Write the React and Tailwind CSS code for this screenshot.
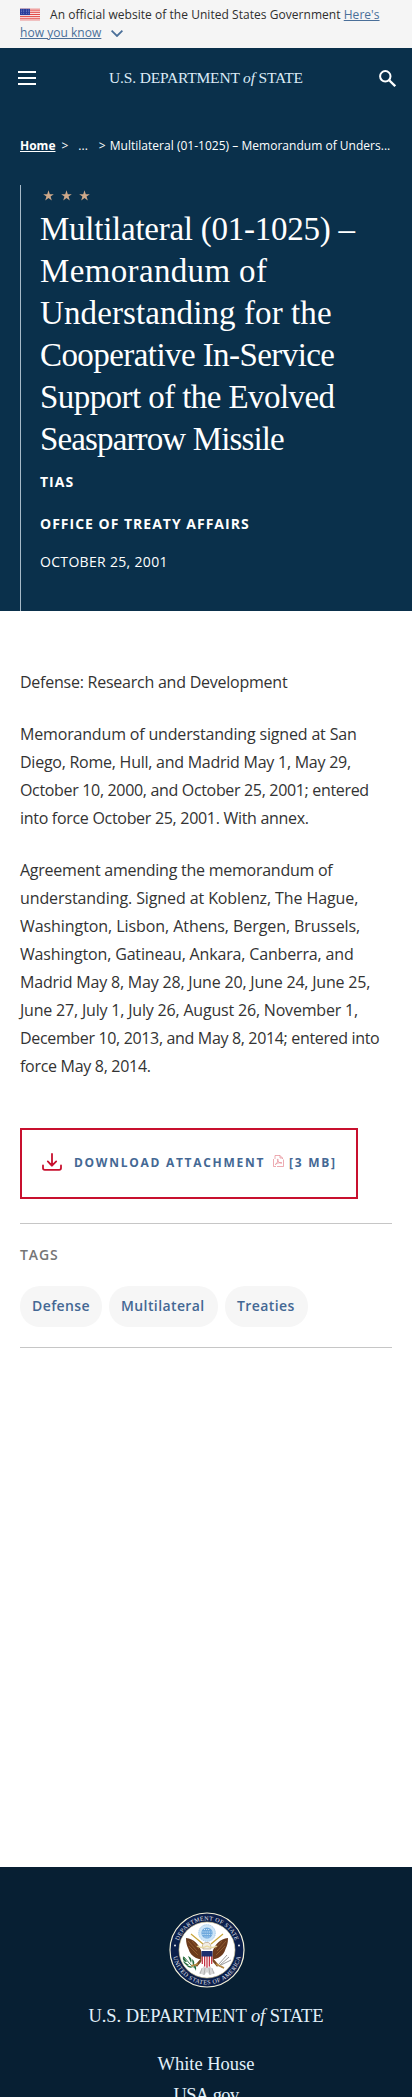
const stripes = [0, 1, 2, 3, 4, 5, 6];

function Flag() {
  return (
    <svg className="mr-[10px] inline-block h-3 w-5 -translate-y-[1.500px]" viewBox="0 0 20 12">
      <rect width="20" height="12" fill="#fff" />
      {stripes.map((n) => (
        <rect key={n} y={n * 1.85} width="20" height="0.98" fill="#e0403e" />
      ))}
      <rect width="10" height="6.6" fill="#2a3c9b" />
      {[1.5, 3.3, 5.1].map((y) =>
        [1.5, 4, 6.5, 9].map((x) => <circle key={x + "-" + y} cx={x - 0.2} cy={y} r="0.45" fill="#b9c0ea" />)
      )}
    </svg>
  );
}

function Star() {
  return (
    <svg className="h-[11px] w-[11px]" viewBox="0 0 24 24" fill="#cfa98a">
      <path d="M12 .8l2.8 8.3h8.8l-7.1 5.2 2.7 8.5-7.2-5.2-7.2 5.2 2.7-8.5L.4 9.1h8.8z" />
    </svg>
  );
}

function Wordmark({ className }) {
  return (
    <span className={"whitespace-nowrap " + className}>
      U.S. DEPARTMENT <i>of</i> STATE
    </span>
  );
}

function Seal() {
  return (
    <svg className="ml-px h-[76px] w-[76px] shrink-0" viewBox="-38 -38 76 76">
      <defs>
        <path id="seal-top" d="M-29.6 0A29.6 29.6 0 0 1 29.6 0" />
        <path id="seal-bottom" d="M-34.3 0A34.3 34.3 0 0 0 34.3 0" />
      </defs>
      <circle r="37" fill="#0b1f4b" stroke="#f3f0d8" strokeWidth="1.2" />
      <circle r="28" fill="#fff" stroke="#d8c992" strokeWidth="0.6" />
      <g fill="#e8eaf2" fontFamily="Liberation Serif, serif" fontSize="6">
        <text textAnchor="middle" textLength="74">
          <textPath href="#seal-top" startOffset="50%" textLength="74">DEPARTMENT OF STATE</textPath>
        </text>
        <text textAnchor="middle" textLength="94">
          <textPath href="#seal-bottom" startOffset="50%" textLength="94">UNITED STATES OF AMERICA</textPath>
        </text>
      </g>
      <circle cx="-32" cy="-4.5" r="0.9" fill="#fff" />
      <circle cx="32" cy="-4.5" r="0.9" fill="#fff" />
      <circle cy="-17" r="8.3" fill="#cfe6f8" stroke="#9bc4e6" strokeWidth="0.9" strokeDasharray="1.4 0.6" />
      <circle cy="-17" r="5.6" fill="#6fa9dd" />
      <path d="M-3-20.5h6M-4.5-18h9M-4.5-15.5h9M-2.5-13h5" stroke="#d9ecfa" strokeWidth="1" strokeDasharray="1 1.1" />
      <path d="M-16-16L-4-6M16-16L4-6" stroke="#c9a63c" strokeWidth="1.2" />
      <path d="M-5 3C-8-6-13-11-21-12C-21-7-20-4-18.500-1C-17.500 3-15 6-11 8C-9 9-7 9-5 9Z" fill="#6b3a1c" />
      <path d="M5 3C8-6 13-11 21-12C21-7 20-4 18.500-1C17.500 3 15 6 11 8C9 9 7 9 5 9Z" fill="#6b3a1c" />
      <path d="M-19-9l9 10M-18-4l9 9M-15-9l7 8M19-9l-9 10M18-4l-9 9M15-9l-7 8" stroke="#a8713c" strokeWidth="0.6" />
      <path d="M-5 9l-6 7M5 9l6 7" stroke="#7a4a22" strokeWidth="2.600" />
      <path d="M-3 16L-8 23L-3 25L0 22L3 25L8 23L3 16Z" fill="#d9d9d9" />
      <path d="M-5 18l-2 6M-2 18l-1 7M2 18l1 7M5 18l2 6" stroke="#888" strokeWidth="0.500" />
      <path d="M-4-1C-6-5-3-8 0-7.500C3-8 4-5 4-1Z" fill="#f2eee4" stroke="#9b7d58" strokeWidth="0.500" />
      <path d="M-10-4Q-5-1 0-4Q5-1 10-4" fill="none" stroke="#e8d9a0" strokeWidth="1.400" />
      <path d="M-5.500 1H5.500V12Q5 16 0 18Q-5 16-5.500 12Z" fill="#fff" />
      <path d="M-4.700 6V14M-2.350 6V16.500M0 6V17.700M2.350 6V16.500M4.700 6V14" stroke="#c1283a" strokeWidth="1.200" />
      <path d="M-5.500 1H5.500V6.500H-5.500Z" fill="#1d2f6f" />
      <path d="M-11 19Q-17 15-23 7" fill="none" stroke="#256b3c" strokeWidth="0.900" />
      <path d="M-24 6q-1 6 4 6zM-24 11q2 5 6 4zM-21 15q3 4 7 2zM-19 6q5 2 3 7zM-15 9q4 3 1 7zM-14 14q4 1 3 7z" fill="#256b3c" />
      <path d="M10 15l7 3M13 15l9-8M12 14l8-9M14 15l10-5" stroke="#9c9c9c" strokeWidth="1" />
      <path d="M-16 16l7-2M9 14l8 4" stroke="#b68a42" strokeWidth="1.800" />
    </svg>
  );
}

function DownloadIcon() {
  return (
    <svg className="h-[18px] w-5 shrink-0 -translate-y-px" viewBox="0 0 20 18" fill="none" stroke="#c8102e" strokeWidth="1.800" strokeLinecap="round" strokeLinejoin="round">
      <path d="M10 1v11.300M5.800 8.400L10 12.600l4.200-4.200" />
      <path d="M7.500 10.500h5L10 13z" fill="#c8102e" strokeWidth="0.600" />
      <path d="M1 12.500v2.500q0 1.800 1.800 1.800h14.400q1.800 0 1.800-1.800V12.500" />
    </svg>
  );
}

function PdfIcon() {
  return (
    <svg className="mr-[5px] ml-[8px] h-[12px] w-[11px] shrink-0 -translate-y-[2px]" viewBox="0 0 11 12" fill="none" stroke="#e58790" strokeWidth="0.700">
      <path d="M2 4V.5h5l2.500 2.500v1M7 .5V3h2.500" />
      <path d="M.5 4v7.500H3M10.500 4.500v7H4" />
      <path d="M2.200 9.500C4 8.500 5.200 6 5 4.200C4.500 3.400 4 4.500 5 6C6 7.800 7.500 8.500 9 8C8.500 7 5 7.500 2.200 9.500Z" />
    </svg>
  );
}

export default function App() {
  return (
    <div className="flex h-[2097px] w-full flex-col overflow-hidden bg-white font-['Open_Sans',sans-serif] text-[#333]">
      <div className="h-12 shrink-0 bg-[#f5f5f5] px-5 pt-[6px] text-[12px] leading-[18px] tracking-[0.04px] whitespace-nowrap text-[#2e2e2e]">
        <Flag />
        An official website of the United States Government <span className="text-[#4a6f99] underline">Here's</span>
        <br />
        <span className="text-[#4a6f99] underline">how you know</span>
        <svg className="ml-[10px] inline-block h-[7px] w-3" viewBox="0 0 12 7" fill="none" stroke="#4a6f99" strokeWidth="1.800">
          <path d="M.6.7L6 6 11.400.7" />
        </svg>
      </div>

      <div className="flex h-[563px] shrink-0 flex-col bg-[#0a304b] text-white">
        <header className="flex h-[60px] shrink-0 items-center justify-between pr-[16px] pl-[18px]">
          <div className="flex h-[14px] w-[18px] flex-col justify-between">
            <span className="h-[2px] bg-white" />
            <span className="h-[2px] bg-white" />
            <span className="h-[2px] bg-white" />
          </div>
          <Wordmark className="mr-[3px] font-['Liberation_Serif',serif] text-[15.500px] leading-5 tracking-[-0.18px] text-[#dcebf7]" />
          <svg className="h-[17px] w-[17px]" viewBox="0 0 17 17" fill="none" stroke="#fff" strokeWidth="2">
            <circle cx="6.300" cy="6.300" r="5.200" />
            <path d="M10.200 10.200L16.200 16.200" strokeWidth="2.300" />
          </svg>
        </header>

        <nav className="mt-[29px] flex h-[18px] items-center px-5 text-[12px] leading-[18px] whitespace-nowrap">
          <b className="underline">Home</b>
          <span className="ml-[6px]">&gt;</span>
          <span className="ml-[10px]">...</span>
          <span className="ml-[11px]">&gt;</span>
          <span className="ml-[4px] tracking-[0.02px]">Multilateral (01-1025) – Memorandum of Unders...</span>
        </nav>

        <div className="mt-[30px] ml-5 flex flex-1 flex-col border-l border-[#a8bac8] pl-[19px]">
          <div className="mt-[5px] flex gap-[7px] pl-[3px]">
            <Star />
            <Star />
            <Star />
          </div>
          <h1 className="mt-[7px] font-['Liberation_Serif',serif] text-[33px] leading-[42px] whitespace-nowrap">
            <span className="block tracking-[-0.25px]">Multilateral (01-1025) –</span>
            <span className="block tracking-[0.35px]">Memorandum of</span>
            <span className="block tracking-[0.1px]">Understanding for the</span>
            <span className="block tracking-[-0.57px]">Cooperative In-Service</span>
            <span className="block tracking-[-0.57px]">Support of the Evolved</span>
            <span className="block tracking-[-0.86px]">Seasparrow Missile</span>
          </h1>
          <p className="mt-[12px] text-[14px] leading-5 font-bold tracking-[1px]">TIAS</p>
          <p className="mt-[22px] text-[14px] leading-5 font-bold tracking-[1px]">OFFICE OF TREATY AFFAIRS</p>
          <p className="mt-[18px] text-[14px] leading-5 tracking-[0.32px]">OCTOBER 25, 2001</p>
        </div>
      </div>

      <main className="flex shrink-0 flex-col px-5 pt-[57px]">
        <div className="flex flex-col gap-6 text-[16px] leading-7 whitespace-nowrap">
          <p className="tracking-[-0.24px]">Defense: Research and Development</p>
          <p>
            <span className="block tracking-[-0.17px]">Memorandum of understanding signed at San</span>
            <span className="block tracking-[-0.25px]">Diego, Rome, Hull, and Madrid May 1, May 29,</span>
            <span className="block tracking-[-0.33px]">October 10, 2000, and October 25, 2001; entered</span>
            <span className="block tracking-[-0.3px]">into force October 25, 2001. With annex.</span>
          </p>
          <p>
            <span className="block tracking-[-0.25px]">Agreement amending the memorandum of</span>
            <span className="block tracking-[-0.1px]">understanding. Signed at Koblenz, The Hague,</span>
            <span className="block tracking-[-0.07px]">Washington, Lisbon, Athens, Bergen, Brussels,</span>
            <span className="block tracking-[-0.16px]">Washington, Gatineau, Ankara, Canberra, and</span>
            <span className="block tracking-[-0.19px]">Madrid May 8, May 28, June 20, June 24, June 25,</span>
            <span className="block tracking-[-0.19px]">June 27, July 1, July 26, August 26, November 1,</span>
            <span className="block tracking-[-0.34px]">December 10, 2013, and May 8, 2014; entered into</span>
            <span className="block tracking-[-0.3px]">force May 8, 2014.</span>
          </p>
        </div>

        <div className="mt-12 flex h-[71px] w-[338px] items-center border-2 border-[#c8102e] pb-[2px] pl-5 text-[12px] font-bold tracking-[1.72px] whitespace-nowrap text-[#446894]">
          <DownloadIcon />
          <span className="ml-3">DOWNLOAD ATTACHMENT</span>
          <PdfIcon />
          <span>[3 MB]</span>
        </div>

        <section className="mt-6 h-[125px] border-y border-[#c6c6c6] pt-[21px]">
          <h2 className="text-[14px] leading-5 font-semibold tracking-[0.9px] text-[#757575]">TAGS</h2>
          <div className="mt-[21px] flex gap-[7px] text-[14px] leading-5 font-semibold tracking-[0.4px] text-[#446894]">
            <span className="flex h-[41px] w-[82px] items-center rounded-[20px] bg-[#f6f6f6] pb-[2px] pl-3">Defense</span>
            <span className="flex h-[41px] w-[109px] items-center rounded-[20px] bg-[#f6f6f6] pb-[2px] pl-3">Multilateral</span>
            <span className="flex h-[41px] w-[83px] items-center rounded-[20px] bg-[#f6f6f6] pb-[2px] pl-3">Treaties</span>
          </div>
        </section>
      </main>

      <footer className="mt-[519px] flex h-[230px] shrink-0 flex-col items-center overflow-hidden bg-[#071f33] pt-[45px] font-['Liberation_Serif',serif] text-[#e1f0fa]">
        <Seal />
        <Wordmark className="mt-4 shrink-0 text-[18.500px] leading-6 tracking-[-0.06px]" />
        <span className="mt-[21px] shrink-0 text-[18.500px] leading-[31px]">White House</span>
        <span className="shrink-0 text-[18.500px] leading-[31px] tracking-[-0.6px]">USA.gov</span>
      </footer>
    </div>
  );
}
